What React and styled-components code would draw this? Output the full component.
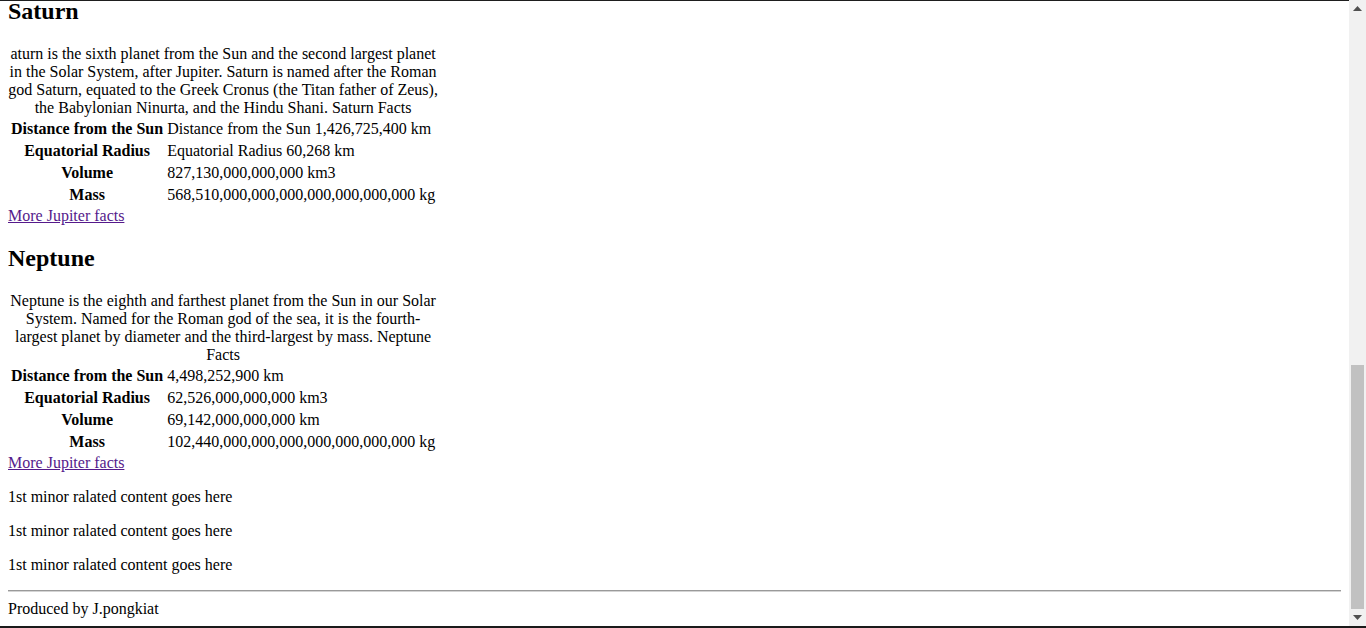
import React from "react";
import styled, { createGlobalStyle } from "styled-components";

const Global = createGlobalStyle`
  html, body { margin: 0; padding: 0; overflow: hidden; background: #ffffff; }
  body { font-family: "Liberation Serif", "Times New Roman", serif; font-size: 16px; color: #000; }
`;

const Window = styled.div`
  width: 1366px;
  height: 628px;
  display: flex;
  flex-direction: column;
  background: #fff;
`;

const Viewport = styled.div`
  flex: 1;
  min-height: 0;
  display: flex;
  flex-direction: row;
`;

const Document = styled.div`
  flex: 1;
  min-width: 0;
  display: flex;
  flex-direction: column;
  justify-content: flex-end;
  overflow: hidden;
  border-top: 1px solid #1e1e1e;
`;

const Body = styled.div`
  padding: 8px;
  flex-shrink: 0;
`;

const BottomEdge = styled.div`
  height: 2px;
  background: #1a1a1a;
`;

const Scrollbar = styled.div`
  width: 17px;
  display: flex;
  flex-direction: column;
  background: #f1f1f1;
`;

const ArrowButton = styled.div`
  height: 17px;
  display: flex;
  align-items: center;
  justify-content: center;
  flex-shrink: 0;
`;

const Track = styled.div`
  flex: 1;
  display: flex;
  flex-direction: column;
  justify-content: flex-end;
  padding: 0 2px;
`;

const Thumb = styled.div`
  height: ${(p) => p.$size}px;
  background: #c1c1c1;
`;

const Planet = styled.section``;

const Heading = styled.h2`
  font-size: 24px;
  font-weight: bold;
  margin: 19.92px 0;
`;

const FactTable = styled.table`
  border-collapse: separate;
  border-spacing: 2px;
  text-indent: 0;
`;

const Caption = styled.caption`
  text-align: center;
`;

const HeadCell = styled.th`
  font-weight: bold;
  text-align: center;
  padding: 1px;
  vertical-align: middle;
`;

const Cell = styled.td`
  padding: 1px;
  text-align: left;
  vertical-align: middle;
`;

const MoreLink = styled.a`
  color: #551a8b;
  text-decoration: underline;
  cursor: pointer;
`;

const Aside = styled.aside``;

const MinorText = styled.p`
  margin: 16px 0;
`;

const Footer = styled.footer``;

const Rule = styled.hr`
  margin: 8px 0;
  border: none;
  border-top: 1px solid #9a9a9a;
  border-bottom: 1px solid #d4d4d4;
  height: 0;
`;

const planets = [
  {
    name: "Saturn",
    caption:
      "aturn is the sixth planet from the Sun and the second largest planet in the Solar System, after Jupiter. Saturn is named after the Roman god Saturn, equated to the Greek Cronus (the Titan father of Zeus), the Babylonian Ninurta, and the Hindu Shani. Saturn Facts",
    rows: [
      ["Distance from the Sun", "Distance from the Sun 1,426,725,400 km"],
      ["Equatorial Radius", "Equatorial Radius 60,268 km"],
      ["Volume", "827,130,000,000,000 km3"],
      ["Mass", "568,510,000,000,000,000,000,000,000 kg"],
    ],
  },
  {
    name: "Neptune",
    caption:
      "Neptune is the eighth and farthest planet from the Sun in our Solar System. Named for the Roman god of the sea, it is the fourth-largest planet by diameter and the third-largest by mass. Neptune Facts",
    rows: [
      ["Distance from the Sun", "4,498,252,900 km"],
      ["Equatorial Radius", "62,526,000,000,000 km3"],
      ["Volume", "69,142,000,000,000 km"],
      ["Mass", "102,440,000,000,000,000,000,000,000 kg"],
    ],
  },
];

const Triangle = ({ down }) => (
  <svg width="9" height="5" viewBox="0 0 9 5">
    <path d={down ? "M0 0 L9 0 L4.5 5 Z" : "M0 5 L9 5 L4.5 0 Z"} fill="#505050" />
  </svg>
);

export default function App() {
  return (
    <>
      <Global />
      <Window>
        <Viewport>
          <Document>
            <Body>
              {planets.map((p) => (
                <Planet key={p.name}>
                  <Heading>{p.name}</Heading>
                  <FactTable>
                    <Caption>{p.caption}</Caption>
                    <tbody>
                      {p.rows.map(([k, v]) => (
                        <tr key={k}>
                          <HeadCell>{k}</HeadCell>
                          <Cell>{v}</Cell>
                        </tr>
                      ))}
                    </tbody>
                  </FactTable>
                  <MoreLink href="#">More Jupiter facts</MoreLink>
                </Planet>
              ))}
              <Aside>
                <MinorText>1st minor ralated content goes here</MinorText>
                <MinorText>1st minor ralated content goes here</MinorText>
                <MinorText>1st minor ralated content goes here</MinorText>
              </Aside>
              <Footer>
                <Rule />
                Produced by J.pongkiat
              </Footer>
            </Body>
          </Document>
          <Scrollbar>
            <ArrowButton>
              <Triangle />
            </ArrowButton>
            <Track>
              <Thumb $size={244} />
            </Track>
            <ArrowButton>
              <Triangle down />
            </ArrowButton>
          </Scrollbar>
        </Viewport>
        <BottomEdge />
      </Window>
    </>
  );
}
